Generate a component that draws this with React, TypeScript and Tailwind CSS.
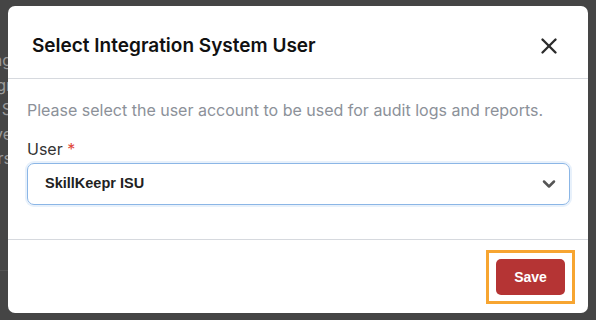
import { X, ChevronDown } from 'lucide-react';

const behind = ['Billing', 'Integr', 'ISU S', 'Save', 'Users'];

export default function App() {
  return (
    <div className="relative h-[320px] w-[596px] overflow-hidden bg-[#454545] font-['Inter',sans-serif]">
      {/* page under the overlay, mostly hidden by the dialog */}
      <div className="absolute left-[-92px] top-[48px] flex w-[104px] flex-col text-right text-[16px] leading-[24.5px] text-[#9b9b9b]">
        {behind.map((t) => (
          <span key={t}>{t}</span>
        ))}
      </div>
      <div className="absolute left-0 top-[270px] h-px w-[10px] bg-[#525252]" />

      <div className="absolute left-[8px] top-[6px] flex h-[307px] w-[580px] flex-col rounded-[7px] bg-white">
        <div className="flex items-center justify-between border-b border-[#d6d9de] pb-[19px] pl-[24px] pr-[26px] pt-[27px]">
          <h2 className="text-[19px] font-semibold leading-[24px] text-[#111]">Select Integration System User</h2>
          <X className="h-[26px] w-[26px] text-[#2b2b2b]" strokeWidth={2.2} />
        </div>

        <div className="flex flex-1 flex-col border-b border-[#d6d9de] pl-[19px] pr-[18px] pt-[21px]">
          <p className="text-[16px] leading-[20px] text-[#8c9199]">
            Please select the user account to be used for audit logs and reports.
          </p>
          <label className="mt-[19px] text-[16px] leading-[20px] text-[#333]">
            User <span className="text-[#e0483a]">*</span>
          </label>
          <div className="mt-[4px] flex h-[42px] items-center justify-between rounded-[7px] border-[1.5px] border-[#8bb6e6] pl-[17px] pr-[10px] shadow-[0_0_0_2px_#e8f1fb]">
            <span className="font-['Liberation_Sans',Arial,sans-serif] text-[14.5px] font-bold text-[#222]">SkillKeepr ISU</span>
            <ChevronDown className="h-[20px] w-[20px] text-[#555]" strokeWidth={3} />
          </div>
        </div>

        <div className="flex justify-end pb-[9px] pr-[13px] pt-[10px]">
          <div className="border-[3px] border-[#f7a531] px-[7px] py-[6px]">
            <button className="h-[36px] w-[69px] rounded-[5px] bg-[#b53434] font-['Liberation_Sans',Arial,sans-serif] text-[14px] font-bold text-white">
              Save
            </button>
          </div>
        </div>
      </div>
    </div>
  );
}
